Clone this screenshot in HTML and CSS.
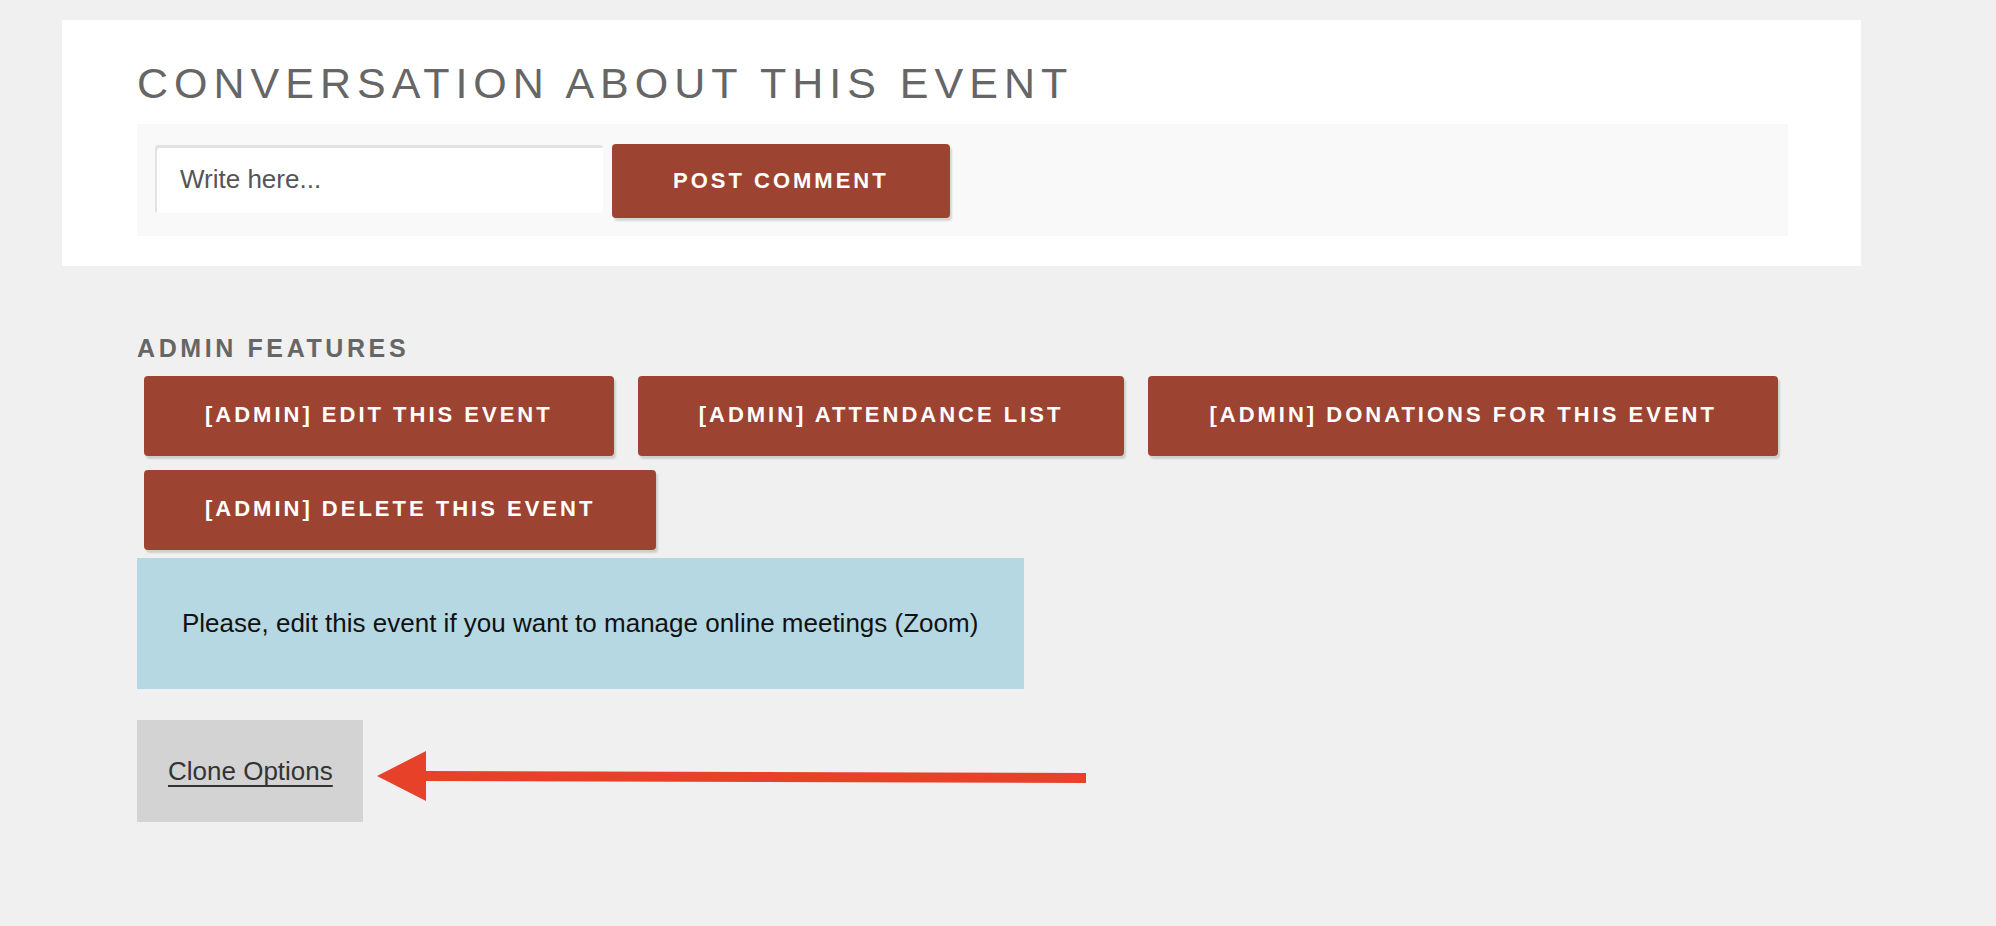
FILE: index.html
```html
<!doctype html>
<html lang="en">
<head>
	<meta charset="UTF-8">
	<title>Event</title>
	<link rel="stylesheet" href="styles.css">
</head>
<body>
	<div class="page">
		<section class="card">
			<h2 class="card-title">CONVERSATION ABOUT THIS EVENT</h2>
			<form class="comment-form">
				<input class="comment-input" type="text" placeholder="Write here...">
				<button class="btn btn-post" type="button">POST COMMENT</button>
			</form>
		</section>

		<section class="admin">
			<h3 class="admin-title">ADMIN FEATURES</h3>
			<div class="admin-actions">
				<a class="btn" href="#">[ADMIN] EDIT THIS EVENT</a>
				<a class="btn" href="#">[ADMIN] ATTENDANCE LIST</a>
				<a class="btn" href="#">[ADMIN] DONATIONS FOR THIS EVENT</a>
				<a class="btn" href="#">[ADMIN] DELETE THIS EVENT</a>
			</div>
			<div class="notice">Please, edit this event if you want to manage online meetings (Zoom)</div>
			<div class="clone-row">
				<div class="clone-box"><a class="clone-link" href="#">Clone Options</a></div>
				<svg class="arrow" width="710" height="50" viewBox="0 0 710 50">
					<polygon points="0,25 49,0 49,50" fill="#e8412a"/>
					<polygon points="48,20 709,22 709,32 48,30" fill="#e8412a"/>
				</svg>
			</div>
		</section>
	</div>
</body>
</html>
```

FILE: styles.css
```css
body, div, h2, h3, form, section{
	margin: 0;
	padding: 0;
}
body{
	background-color: #f0f0f0;
	font-family: 'Liberation Sans', Arial, sans-serif;
}
.page{
	padding-top: 20px;
	margin-left: 62px;
}
.card{
	box-sizing: border-box;
	width: 1799px;
	padding: 42px 73px 30px 75px;
	background-color: #fff;
}
.card-title{
	font-size: 43px;
	line-height: 43px;
	font-weight: normal;
	letter-spacing: 6px;
	color: #666;
	margin-bottom: 19px;
}
.comment-form{
	display: flex;
	align-items: flex-start;
	gap: 9px;
	height: 112px;
	box-sizing: border-box;
	padding: 20px 18px 18px;
	background-color: #f9f9f9;
}
.comment-input{
	box-sizing: border-box;
	width: 448px;
	height: 68px;
	margin-top: 1px;
	padding: 0 0 0 25px;
	border: none;
	border-radius: 3px;
	box-shadow: inset 2px 3px 0 #e3e3e3;
	background-color: #fff;
	font-family: 'Liberation Sans', Arial, sans-serif;
	font-size: 26px;
	color: #555;
	outline: none;
}
.comment-input::placeholder{
	color: #555;
}
.btn{
	display: block;
	padding: 28px 61px 30px;
	border: none;
	border-radius: 4px;
	background-color: #9d4331;
	box-shadow: 2px 3px 2px rgba(0, 0, 0, 0.14);
	color: #fff;
	font-family: 'Liberation Sans', Arial, sans-serif;
	font-size: 22px;
	line-height: 22px;
	font-weight: bold;
	letter-spacing: 3px;
	text-decoration: none;
	white-space: nowrap;
}
.btn-post{
	padding: 26px 61px;
}
.admin{
	box-sizing: border-box;
	width: 1726px;
	padding: 70px 0 0 75px;
	display: flex;
	flex-direction: column;
	align-items: flex-start;
}
.admin-title{
	font-size: 25px;
	line-height: 25px;
	font-weight: bold;
	letter-spacing: 3.6px;
	color: #666;
	margin-bottom: 15px;
}
.admin-actions{
	box-sizing: border-box;
	width: 1651px;
	display: flex;
	flex-wrap: wrap;
	gap: 14px 24px;
	padding-left: 7px;
}
.notice{
	margin-top: 8px;
	padding: 50px 46px 51px 45px;
	background-color: #b5d8e3;
	color: #111;
	font-size: 26px;
	line-height: 30px;
}
.clone-row{
	display: flex;
	align-items: flex-start;
	margin-top: 31px;
}
.clone-box{
	padding: 36px 30px 36px 31px;
	background-color: #d3d3d3;
	font-size: 26px;
	line-height: 30px;
}
.clone-link{
	color: #333;
	text-decoration: underline;
	text-decoration-thickness: 2px;
	text-underline-offset: 5px;
}
.arrow{
	display: block;
	margin: 31px 0 0 14px;
}
```
